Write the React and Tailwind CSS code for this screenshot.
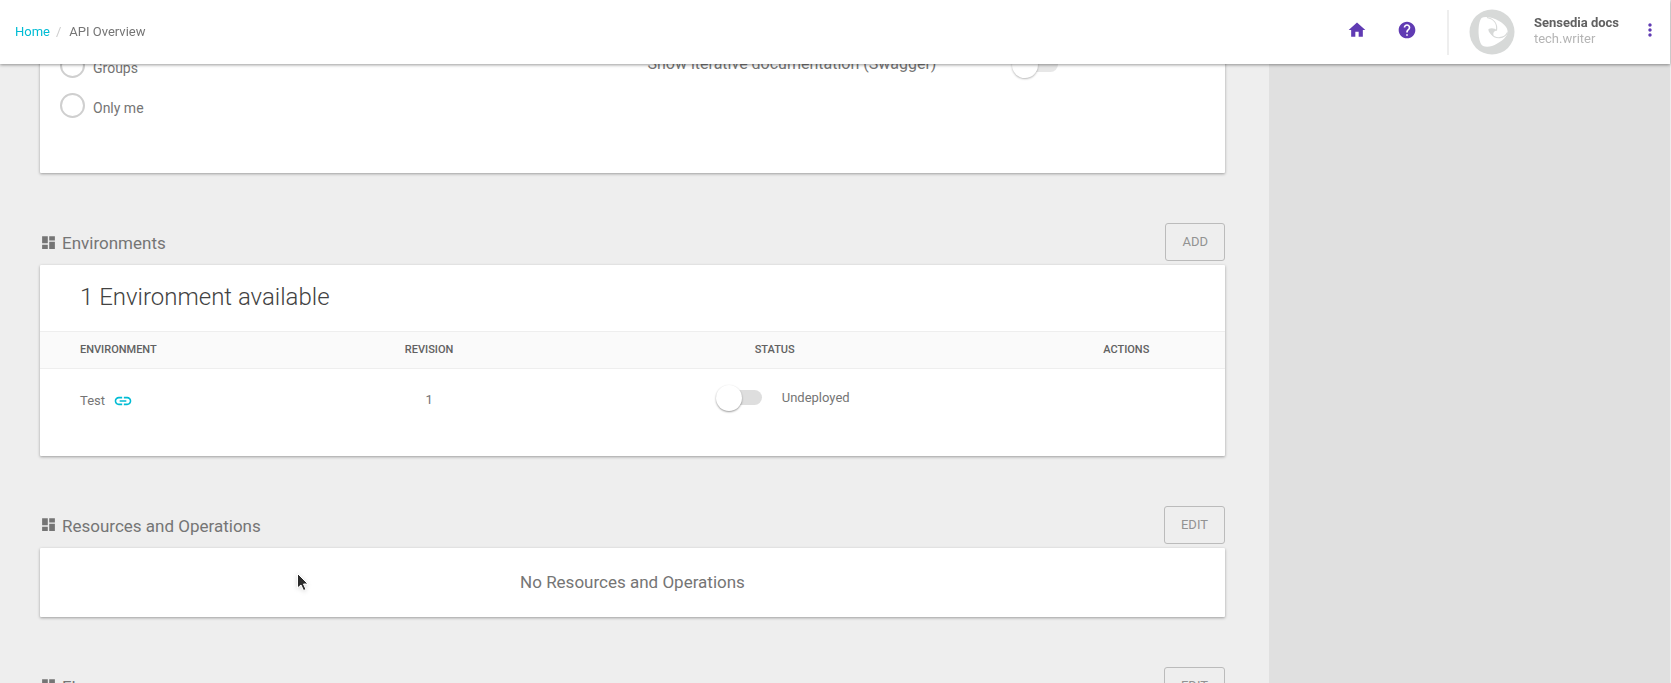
import { MdDashboard, MdHelp, MdHome, MdLink, MdMoreVert } from "react-icons/md";

const environments = [{ name: "Test", revision: 1, status: "Undeployed" }];

const Avatar = () => (
    <svg viewBox="0 0 46 46" className="size-[46px]" aria-hidden="true">
        <circle cx="23" cy="23" r="22.5" fill="#d7d9d8" />
        <path
            d="M12.500 9C16 7 24 8.500 30 12C36 15.500 39.500 20 38.500 24C37.500 29 30 34.500 23 37C18 38.500 13 38 11.500 34C8.500 27 9 13 12.500 9Z"
            fill="#fff"
        />
        <path d="M19.500 20C22 18.500 26 19 28 21.500C25 22 23.800 23.500 24.500 26.500C21.500 25.500 19 22.500 19.500 20Z" fill="#d7d9d8" />
        <path
            d="M18 8.500C25 10 28.500 15 27.500 21.500M38.500 23.500C35.500 29.500 26.500 31 22 24.500"
            fill="none"
            stroke="#d7d9d8"
            strokeWidth="1.200"
        />
    </svg>
);

const Switch = ({ id, className = "" }) => (
    <input
        id={id}
        type="checkbox"
        role="switch"
        className={`relative h-[15px] w-[46px] shrink-0 cursor-pointer appearance-none before:absolute before:inset-y-0 before:right-0 before:w-10 before:rounded-full before:bg-[#dedede] after:absolute after:-top-[5px] after:left-0 after:size-[26px] after:rounded-full after:bg-white after:shadow-[0_1px_2px_rgba(0,0,0,0.4)] checked:after:left-5 ${className}`}
    />
);

const Radio = ({ id, label }) => (
    <div className="flex h-10 items-center gap-2">
        <input
            id={id}
            type="radio"
            name="visibility"
            className="size-[25px] appearance-none rounded-full border-2 border-[#cfcfcf] checked:border-[#603bb3]"
        />
        <label htmlFor={id} className="pt-1.5 text-sm text-[#757575]">{label}</label>
    </div>
);

const SectionHeader = ({ title, action }) => (
    <div className="mt-[50px] mb-1 flex h-[38px] items-center justify-between">
        <h2 className="flex items-center gap-[5px] text-[17px] leading-6 text-[#757575]">
            <MdDashboard className="size-[17px]" />
            <span className="pt-0.5">{title}</span>
        </h2>
        <button type="button" className="h-[38px] rounded-[3px] border border-[#bbb] px-4 text-[13px] text-[#929292]">
            {action}
        </button>
    </div>
);

const Card = ({ className = "", children }) => (
    <section className={`rounded-[1px] bg-white shadow-[0_1px_3px_rgba(0,0,0,0.35)] ${className}`}>{children}</section>
);

const Header = () => (
    <header className="fixed top-0 right-px left-0 z-10 flex h-16 items-center justify-between bg-white pr-2.5 pl-[15px] shadow-[0_1px_3px_rgba(0,0,0,0.4)]">
        <nav className="flex items-center text-[13px]">
            <a href="#home" className="text-[#00bcd4]">Home</a>
            <span className="mr-2 ml-[6px] text-[#ccc]">/</span>
            <span className="text-[#757575]">API Overview</span>
        </nav>
        <div className="flex items-center text-[#603bb3]">
            <a href="#home" aria-label="Home" className="pb-1"><MdHome className="size-5" /></a>
            <a href="#help" aria-label="Help" className="ml-[30px] pb-1"><MdHelp className="size-5" /></a>
            <div className="ml-[30px] h-[45px] w-[2px] bg-[#eee]" />
            <div className="ml-5 flex items-center gap-[19px]">
                <Avatar />
                <div className="pb-0.5 text-[13px] leading-4">
                    <p className="font-bold text-[#616161]">Sensedia docs</p>
                    <p className="text-[#b5b5b5]">tech.writer</p>
                </div>
            </div>
            <button type="button" aria-label="More" className="ml-[21px] pb-1">
                <MdMoreVert className="size-5" />
            </button>
        </div>
    </header>
);

const EnvironmentsTable = () => (
    <table className="w-full table-fixed text-[13px] text-[#757575]">
        <thead className="border-y border-[#eee] bg-[#fafafa] text-[11px] text-[#616161]">
            <tr className="h-[37px]">
                <th className="w-1/4 pl-10 text-left font-medium">ENVIRONMENT</th>
                <th className="w-[16%] pr-1 font-medium">REVISION</th>
                <th className="w-[42%] font-medium">STATUS</th>
                <th className="pl-1 font-medium">ACTIONS</th>
            </tr>
        </thead>
        <tbody>
            {environments.map((env) => (
                <tr key={env.name} className="h-[62px]">
                    <td className="pt-0.5 pl-10">
                        <span className="flex items-center gap-2">
                            {env.name}
                            <a href="#link" aria-label="Environment link" className="text-[#00bcd4]">
                                <MdLink className="size-5" />
                            </a>
                        </span>
                    </td>
                    <td className="pr-1 text-center">{env.revision}</td>
                    <td className="pb-1 pl-4">
                        <span className="flex items-center justify-center gap-5">
                            <Switch id={`deploy-${env.name}`} />
                            <label htmlFor={`deploy-${env.name}`}>{env.status}</label>
                        </span>
                    </td>
                    <td></td>
                </tr>
            ))}
        </tbody>
    </table>
);

const App = () => {
    return (
        <div className="flex h-screen overflow-hidden border-r border-[#eee] bg-[#e0e0e0] font-[Roboto,sans-serif]">
            <Header />
            <main className="min-w-0 flex-1 bg-[#eee] pr-11 pl-10">
                <Card className="flex pt-[45px] pb-12 pl-5">
                    <div className="w-1/2">
                        <Radio id="groups" label="Groups" />
                        <Radio id="only-me" label="Only me" />
                    </div>
                    <div className="flex h-[38px] items-center gap-[76px] pl-[5px]">
                        <label htmlFor="swagger" className="text-base text-[#757575]">
                            Show iterative documentation (Swagger)
                        </label>
                        <Switch id="swagger" className="opacity-70" />
                    </div>
                </Card>

                <SectionHeader title="Environments" action="ADD" />
                <Card className="pb-[25px]">
                    <h3 className="px-10 pt-4 pb-[18px] text-2xl font-light text-[#424242]">1 Environment available</h3>
                    <EnvironmentsTable />
                </Card>

                <SectionHeader title="Resources and Operations" action="EDIT" />
                <Card className="flex h-[69px] items-center justify-center pt-0.5 text-[17px] text-[#757575]">
                    No Resources and Operations
                </Card>

                <SectionHeader title="Flows" action="EDIT" />
            </main>
            <aside className="w-[401px] shrink-0" />
            <svg viewBox="0 0 16 22" className="pointer-events-none fixed top-[572px] left-[296px] h-[22px] w-4 drop-shadow-sm" aria-hidden="true">
                <path d="M1.500 1.500V16L5 13L7.500 18.500L10 17.500L7.500 12H12Z" fill="#2b2b2b" stroke="#fff" strokeWidth="1" />
            </svg>
        </div>
    );
};

export default App;
